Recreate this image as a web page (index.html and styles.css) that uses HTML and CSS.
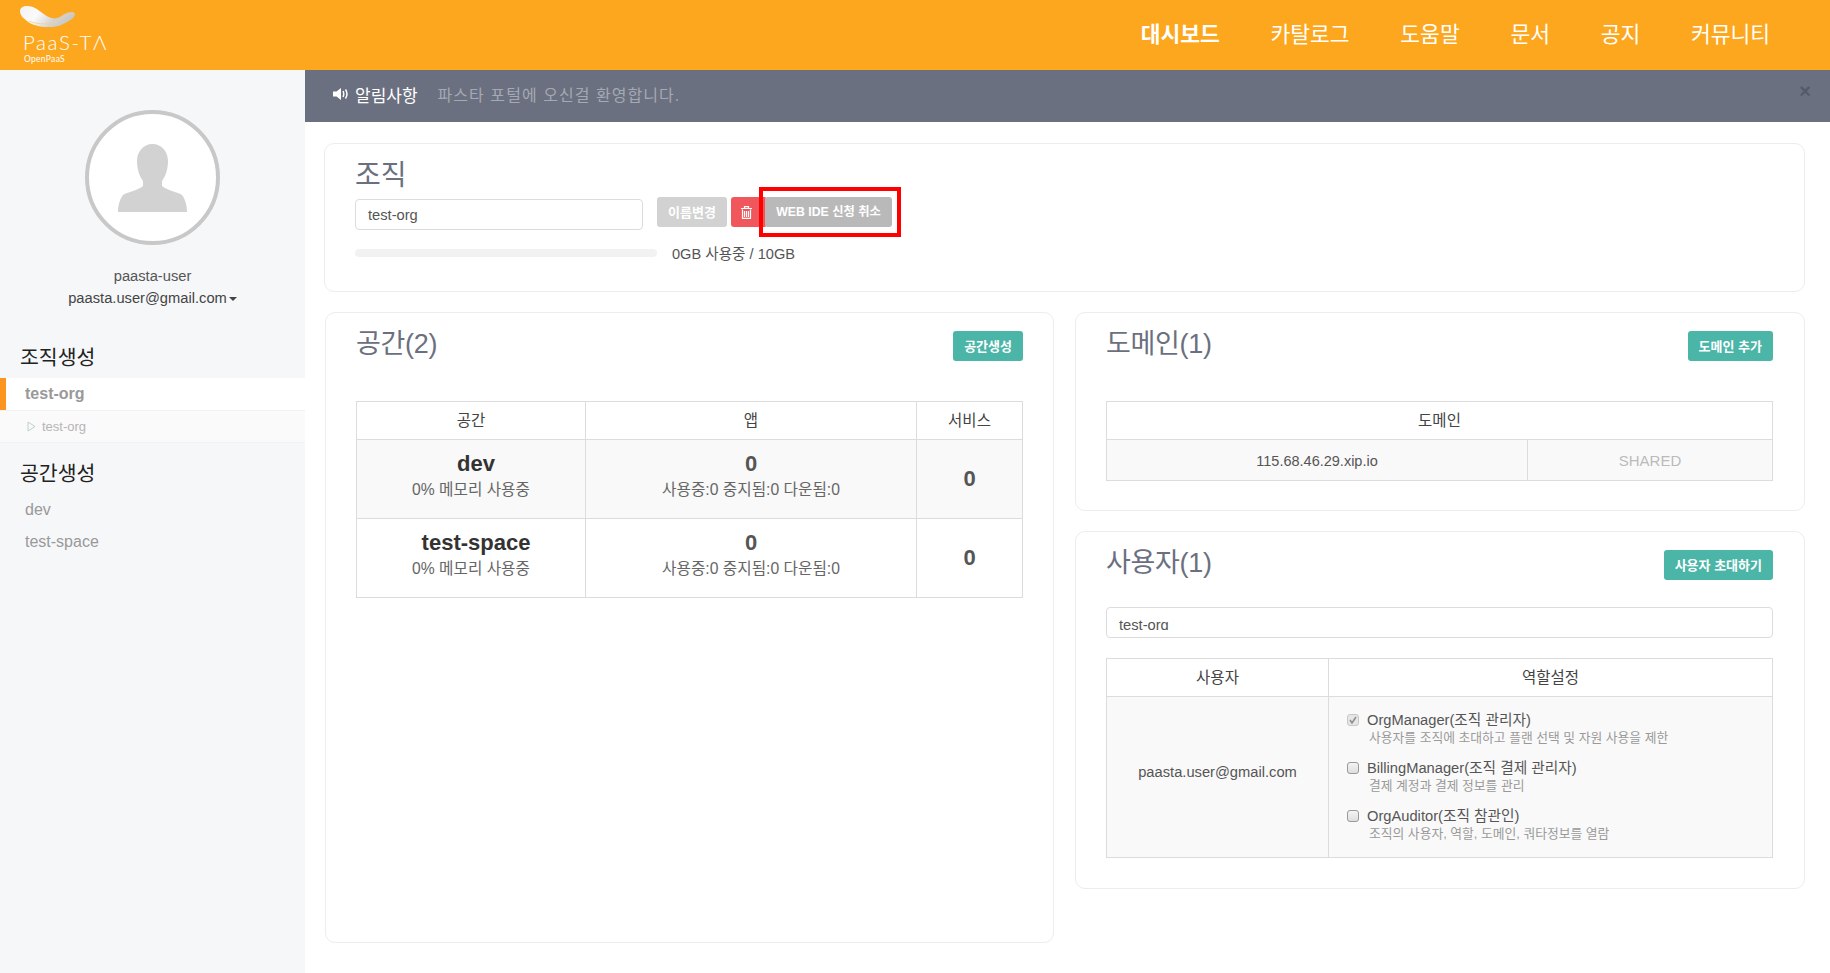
FILE: index.html
```html
<!DOCTYPE html>
<html lang="ko">
<head>
<meta charset="utf-8">
<title>PaaS-TA</title>
<link rel="stylesheet" href="styles.css">
</head>
<body>
<header class="topbar">
  <a class="logo">
    <svg class="logo-mark" width="55" height="21" viewBox="0 0 55 21"><defs><linearGradient id="swoosh" x1="0" y1="0" x2="1" y2="0.3"><stop offset="0" stop-color="#f2f2f2"/><stop offset="0.4" stop-color="#fafafa"/><stop offset="0.75" stop-color="#d2d2d2"/><stop offset="1" stop-color="#c8c8c8"/></linearGradient></defs><path d="M0 5C0 2 3 0 7 0C13 0 17 3 21 6C25 9 29 12 34 12.500C40 12.500 43 8 48 6.500C51 5.500 54 5.500 55 8C55 11 51 14 47 16C42 19 37 21 28 21C20 21 12 19 7 15C3 12 0 9 0 5Z" fill="url(#swoosh)"/><path d="M9 15C18 19 31 19 40 14C44 11 49 8 54 7" fill="none" stroke="#f8cf8c" stroke-width="0.800"/></svg>
    <span class="logo-name">PaaS-TΛ</span>
    <span class="logo-sub">OpenPaaS</span>
  </a>
  <nav class="nav">
    <a class="nav-item is-active">대시보드</a>
    <a class="nav-item">카탈로그</a>
    <a class="nav-item">도움말</a>
    <a class="nav-item">문서</a>
    <a class="nav-item">공지</a>
    <a class="nav-item">커뮤니티</a>
  </nav>
</header>
<div class="shell">
  <aside class="sidebar">
    <div class="avatar">
      <svg width="69" height="68" viewBox="0 0 69 68"><path d="M34.500 0C44 0 50 8 50 17C50 26 47 33 44 37V42C50 47 60 48 64 51C67 55 69 61 69 68H0C0 61 2 55 5 51C9 48 19 47 25 42V37C22 33 19 26 19 17C19 8 25 0 34.500 0Z" fill="#d2d2d2"/></svg>
    </div>
    <div class="user-name">paasta-user</div>
    <div class="user-mail">paasta.user@gmail.com<span class="caret"></span></div>
    <h3 class="side-title side-title-org">조직생성</h3>
    <div class="side-active">test-org</div>
    <div class="side-sub">
      <svg width="9" height="11" viewBox="0 0 9 11"><path d="M1 1L8 5.500L1 10Z" fill="none" stroke="#bcd0c8" stroke-width="1"/></svg>
      <span>test-org</span>
    </div>
    <h3 class="side-title side-title-space">공간생성</h3>
    <div class="side-link">dev</div>
    <div class="side-link">test-space</div>
  </aside>
  <main class="main">
    <div class="notice">
      <svg class="notice-icon" width="16" height="12" viewBox="0 0 16 12"><path d="M0 3.500H3.500L8 0V12L3.500 8.500H0Z" fill="#fff"/><path d="M10 3C11 5 11 7 10 9M12.500 1.500C14.500 4.500 14.500 7.500 12.500 10.500" fill="none" stroke="#fff" stroke-width="1.500"/></svg>
      <strong class="notice-label">알림사항</strong>
      <span class="notice-text">파스타 포털에 오신걸 환영합니다.</span>
      <span class="notice-close">×</span>
    </div>
    <div class="content">
      <section class="card card-org">
        <h2 class="card-title card-title-org">조직</h2>
        <div class="org-row">
          <div class="field field-org">test-org</div>
          <button class="btn btn-muted">이름변경</button>
          <button class="btn btn-danger" aria-label="삭제">
            <svg width="11" height="13" viewBox="0 0 11 13"><path d="M0 2.500H11M3.500 2V.6H7.500V2M1.500 3.500V12.400H9.500V3.500M3.500 5V11M5.500 5V11M7.500 5V11" fill="none" stroke="#fff" stroke-width="1.200"/></svg>
          </button>
          <span class="marked">
            <button class="btn btn-grey">WEB IDE 신청 취소</button>
          </span>
        </div>
        <div class="usage">
          <div class="usage-bar"></div>
          <span class="usage-text">0GB 사용중 / 10GB</span>
        </div>
      </section>
      <div class="columns">
        <section class="card card-spaces">
          <div class="card-head">
            <h2 class="card-title">공간(2)</h2>
            <button class="btn btn-teal">공간생성</button>
          </div>
          <table class="grid grid-spaces">
            <thead><tr><th>공간</th><th>앱</th><th>서비스</th></tr></thead>
            <tbody>
              <tr class="alt">
                <td><div class="name">dev</div><div class="meta">0% 메모리 사용중</div></td>
                <td><div class="num">0</div><div class="meta">사용중:0 중지됨:0 다운됨:0</div></td>
                <td class="service-cell"><div class="num">0</div></td>
              </tr>
              <tr>
                <td><div class="name">test-space</div><div class="meta">0% 메모리 사용중</div></td>
                <td><div class="num">0</div><div class="meta">사용중:0 중지됨:0 다운됨:0</div></td>
                <td class="service-cell"><div class="num">0</div></td>
              </tr>
            </tbody>
          </table>
        </section>
        <div class="stack">
          <section class="card card-domain">
            <div class="card-head">
              <h2 class="card-title">도메인(1)</h2>
              <button class="btn btn-teal">도메인 추가</button>
            </div>
            <table class="grid grid-domain">
              <colgroup><col class="col-domain"><col></colgroup>
              <thead><tr><th colspan="2">도메인</th></tr></thead>
              <tbody>
                <tr class="alt"><td class="domain-name">115.68.46.29.xip.io</td><td class="domain-type">SHARED</td></tr>
              </tbody>
            </table>
          </section>
          <section class="card card-users">
            <div class="card-head">
              <h2 class="card-title">사용자(1)</h2>
              <button class="btn btn-teal">사용자 초대하기</button>
            </div>
            <div class="field field-user"><span class="field-clip">test-org</span></div>
            <table class="grid grid-users">
              <thead><tr><th>사용자</th><th>역할설정</th></tr></thead>
              <tbody>
                <tr class="alt">
                  <td class="user-cell">paasta.user@gmail.com</td>
                  <td class="roles">
                    <div class="role">
                      <span class="check is-on"><svg width="8" height="8" viewBox="0 0 8 8"><path d="M1 4L3 7L7 1" fill="none" stroke="#8c8c8c" stroke-width="1.500"/></svg></span>
                      <div><div class="role-name">OrgManager(조직 관리자)</div><div class="role-desc">사용자를 조직에 초대하고 플랜 선택 및 자원 사용을 제한</div></div>
                    </div>
                    <div class="role">
                      <span class="check"></span>
                      <div><div class="role-name">BillingManager(조직 결제 관리자)</div><div class="role-desc">결제 계정과 결제 정보를 관리</div></div>
                    </div>
                    <div class="role">
                      <span class="check"></span>
                      <div><div class="role-name">OrgAuditor(조직 참관인)</div><div class="role-desc">조직의 사용자, 역할, 도메인, 쿼타정보를 열람</div></div>
                    </div>
                  </td>
                </tr>
              </tbody>
            </table>
          </section>
        </div>
      </div>
    </div>
  </main>
</div>
</body>
</html>
```
FILE: styles.css
```css
* { box-sizing: border-box; }
html, body { margin: 0; height: 100%; }
body {
  height: 973px;
  overflow: hidden;
  background: #fff;
  color: #555;
  font-family: "Liberation Sans", "Noto Sans CJK KR", sans-serif;
  font-size: 14.700px;
  display: flex;
  flex-direction: column;
}
h2, h3 { margin: 0; font-weight: 400; }
button { font-family: inherit; border: 0; margin: 0; }

.topbar {
  height: 70px;
  flex: none;
  background: #fda71e;
  display: flex;
  justify-content: space-between;
  padding: 0 60px 0 20px;
}
.logo { display: flex; flex-direction: column; align-items: flex-start; color: #fff; }
.logo-mark { margin-top: 6px; }
.logo-name { font-family: Lato, sans-serif; font-weight: 300; font-size: 20.500px; line-height: 20px; letter-spacing: 1.600px; margin: 5px 0 0 3px; }
.logo-sub { font-family: Lato, sans-serif; font-size: 8.500px; line-height: 10px; letter-spacing: .3px; margin: 2px 0 0 4px; }
.nav { display: flex; gap: 50.700px; align-items: center; }
.nav-item { font-size: 21.500px; color: #fff; line-height: 30px; }
.nav-item.is-active { font-weight: 700; }

.shell { flex: 1; display: flex; min-height: 0; }
.sidebar { width: 305px; flex: none; background: #f6f7f9; display: flex; flex-direction: column; align-items: stretch; padding-top: 40px; text-align: center; }
.avatar { width: 135px; height: 135px; margin: 0 auto; border: 4px solid #c8c8c8; border-radius: 50%; background: #fff; display: flex; justify-content: center; padding-top: 30px; }
.user-name { margin-top: 20px; line-height: 22px; color: #555; }
.user-mail { line-height: 22px; color: #444; }
.caret { display: inline-block; margin-left: 2px; vertical-align: middle; border-top: 4px solid #444; border-left: 4px solid transparent; border-right: 4px solid transparent; }
.side-title { text-align: left; font-size: 20.500px; line-height: 28px; color: #222; padding-left: 20px; }
.side-title-org { margin-top: 35px; }
.side-title-space { margin-top: 17px; }
.side-active { margin-top: 6px; height: 32px; line-height: 32px; background: #fff; border-left: 6px solid #fb951f; padding-left: 19px; text-align: left; font-weight: 700; font-size: 16px; color: #999; }
.side-sub { height: 33px; background: #fafafa; border-top: 1px solid #f2f2f2; border-bottom: 1px solid #f2f2f2; display: flex; align-items: center; gap: 6px; padding-left: 27px; font-size: 13px; color: #b5b5b5; }
.side-link { text-align: left; padding-left: 25px; font-size: 16px; line-height: 32px; color: #999; }
.side-title-space + .side-link { margin-top: 6px; }

.main { flex: 1; min-width: 0; display: flex; flex-direction: column; }
.notice { height: 52px; flex: none; background: #6b7080; display: flex; align-items: center; padding: 0 19px 4px 28px; }
.notice-icon { flex: none; margin-right: 6px; }
.notice-label { font-weight: 400; font-size: 17px; color: #fff; }
.notice-text { margin-left: 20px; font-size: 16px; letter-spacing: 1.050px; color: #a6a9b3; }
.notice-close { margin-left: auto; font-size: 20px; font-weight: 700; color: #555a68; margin-top: -5px; }

.content { padding: 21px 25px 0 19px; }
.card { background: #fff; border: 1px solid #ededed; border-radius: 10px; }
.card-title { font-size: 27px; line-height: 36px; color: #6b7080; letter-spacing: -.3px; }
.card-title-org { font-size: 28px; letter-spacing: 0; }
.card-org { height: 149px; padding: 14px 30px 0; }
.org-row { display: flex; align-items: flex-start; margin-top: 3px; }
.field { border: 1px solid #dcdcdc; border-radius: 4px; height: 31px; color: #555; padding-left: 12px; line-height: 30px; background: #fff; }
.field-org { width: 288px; margin-top: 2px; margin-right: 14px; }
.btn { height: 30px; border-radius: 3px; color: #fff; font-weight: 700; font-size: 13px; padding: 0 0 2px; display: inline-flex; align-items: center; justify-content: center; }
.btn-muted { width: 70px; background: #d2d2d2; }
.btn-danger { width: 36px; margin-left: 4px; padding: 0 5px 0 0; background: #f0575c; }
.btn-grey { width: 127px; background: #b9b9b9; font-size: 12.300px; }
.btn-teal { background: #4bb5a8; height: 30px; padding: 0 11px 2px; }
.marked { position: relative; display: block; margin-left: -2px; }
.marked::after { content: ""; position: absolute; left: -6px; right: -9px; top: -10px; bottom: -10px; border: 4px solid #f00; pointer-events: none; }
.usage { display: flex; align-items: center; margin-top: 12px; }
.usage-bar { width: 302px; height: 8px; background: #f3f2f2; border-radius: 4px; }
.usage-text { margin-left: 15px; color: #555; font-size: 14.600px; }

.columns { display: grid; grid-template-columns: 729px 730px; gap: 21px; margin-top: 20px; padding-left: 1px; }
.card-spaces { height: 631px; padding: 18px 30px 0; }
.stack { display: flex; flex-direction: column; gap: 20px; }
.card-domain { height: 199px; padding: 18px 31px 0 30px; }
.card-users { height: 358px; padding: 18px 31px 0 30px; }
.card-head { display: flex; justify-content: space-between; align-items: flex-start; height: 70px; }
.card-users .card-head { height: 57px; }
.card-head .card-title { margin-top: -5px; }
.grid { width: 100%; border-collapse: collapse; table-layout: fixed; }
.grid th, .grid td { border: 1px solid #dcdcdc; text-align: center; padding: 0; }
.grid th { height: 38px; padding-bottom: 4px; font-weight: 400; font-size: 15.500px; color: #444; background: #fff; }
.grid .alt td { background: #f9f9f9; }
.grid-spaces th:nth-child(1) { width: 229px; }
.grid-spaces th:nth-child(3) { width: 106px; }
.grid-spaces td { height: 79px; padding-bottom: 4px; }
.grid-spaces td.service-cell { padding-bottom: 0; }
.name { font-weight: 700; font-size: 22px; line-height: 26px; color: #333; padding-left: 10px; }
.num { font-weight: 700; font-size: 22px; line-height: 26px; color: #555; }
.meta { font-size: 15.700px; line-height: 26px; color: #666; }
.grid-domain td { height: 41px; }
.col-domain { width: 421px; }
.grid-domain td.domain-name { color: #555; font-size: 14.500px; padding-top: 2px; }
.domain-type { color: #bbb; font-size: 15px; }
.field-user { margin-bottom: 20px; line-height: 34px; }
.field-clip { display: block; height: 22px; overflow: hidden; }
.grid-users th:first-child { width: 222px; }
.grid-users td.user-cell { color: #555; padding-bottom: 10px; }
.grid-users td.roles { text-align: left; padding: 13px 0 3px 0; }
.role { display: flex; gap: 8px; padding-left: 18px; height: 48px; align-items: flex-start; }
.role-name { line-height: 20px; color: #555; }
.role-desc { font-size: 12.800px; line-height: 16px; color: #999; padding-left: 2px; }
.check { flex: none; width: 12px; height: 12px; margin-top: 4px; border: 1px solid #9a9a9a; border-radius: 3px; background: linear-gradient(#f4f4f4, #dedede); display: flex; align-items: center; justify-content: center; }
.check.is-on { border-color: #c8c8c8; background: #e6e6e6; }
```
